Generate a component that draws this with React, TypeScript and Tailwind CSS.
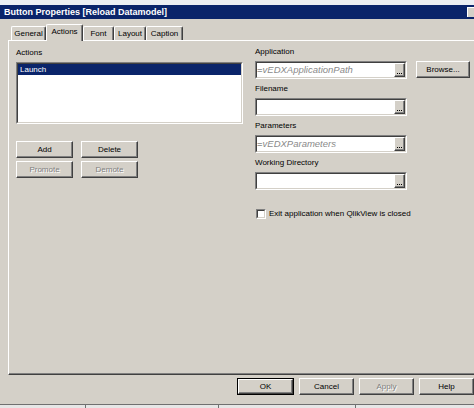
import React from "react";

const font = { fontFamily: '"Liberation Sans", Arial, sans-serif' };

function Btn({ label, w, disabled, className = "" }: { label: string; w: string; disabled?: boolean; className?: string }) {
  return (
    <div
      className={`${w} h-[17px] flex items-center justify-center bg-[#d4d0c8] border border-t-white border-l-white border-r-[#404040] border-b-[#404040] shadow-[inset_-1px_-1px_0_#808080] text-[8px] leading-none ${
        disabled ? "text-[#808080] [text-shadow:1px_1px_0_#ffffff]" : "text-black"
      } ${className}`}
    >
      {label}
    </div>
  );
}

function Ellipsis() {
  return (
    <div className="w-[11px] h-full flex items-end justify-center pb-[2px] bg-[#d4d0c8] border border-t-white border-l-white border-r-[#404040] border-b-[#404040] shadow-[inset_-1px_-1px_0_#808080]">
      <div className="flex gap-[1px]">
        <div className="w-[1px] h-[1px] bg-black" />
        <div className="w-[1px] h-[1px] bg-black" />
        <div className="w-[1px] h-[1px] bg-black" />
      </div>
    </div>
  );
}

function Field({ text }: { text?: string }) {
  return (
    <div className="w-[152px] h-[18px] border border-t-[#808080] border-l-[#808080] border-r-white border-b-white">
      <div className="h-full w-full flex border border-t-[#404040] border-l-[#404040] border-r-[#d4d0c8] border-b-[#d4d0c8] bg-white">
        <div className="flex-1 flex items-center text-[9.5px] leading-none whitespace-nowrap overflow-hidden">
          {text ? (
            <>
              <span className="text-[#505050]">=</span>
              <span className="italic text-[#8a8a8a]">{text}</span>
            </>
          ) : null}
        </div>
        <Ellipsis />
      </div>
    </div>
  );
}

function Label({ text, className = "" }: { text: string; className?: string }) {
  return <div className={`h-[10px] text-[8px] leading-[10px] text-black whitespace-nowrap ${className}`}>{text}</div>;
}

function Tab({ label, w, selected }: { label: string; w: string; selected?: boolean }) {
  if (selected) {
    return (
      <div
        className={`${w} h-[17px] relative z-10 flex items-start justify-center pt-[3px] bg-[#d4d0c8] border-t border-l border-t-white border-l-white border-r border-r-[#404040] shadow-[inset_-1px_0_0_#808080] rounded-t-[2px] text-[8px] leading-none text-black`}
      >
        {label}
      </div>
    );
  }
  return (
    <div
      className={`${w} h-[14px] mb-[1px] flex items-start justify-center pt-[3px] bg-[#d4d0c8] border-t border-l border-t-white border-l-white border-r border-r-[#404040] shadow-[inset_-1px_0_0_#808080] rounded-t-[2px] text-[8px] leading-none text-black`}
    >
      {label}
    </div>
  );
}

export default function App() {
  return (
    <div className="w-[474px] h-[408px] overflow-hidden bg-[#d4d0c8] flex flex-col" style={font}>
      <div className="h-[5px] bg-[#eceff3] shrink-0" />
      <div className="h-[14px] shrink-0 bg-[#0a246a] flex items-center pl-[4px]">
        <span className="text-white font-bold text-[9px] leading-none whitespace-nowrap">Button Properties [Reload Datamodel]</span>
        <div className="ml-auto mr-0 w-[7px] h-[10px] bg-[#d4d0c8] border-l border-t border-l-white border-t-white" />
      </div>
      <div className="h-[5px] shrink-0" />
      <div className="h-[17px] shrink-0 flex items-end pl-[11px]">
        <Tab label="General" w="w-[35px]" />
        <Tab label="Actions" w="w-[37px]" selected />
        <Tab label="Font" w="w-[31px]" />
        <Tab label="Layout" w="w-[32px]" />
        <Tab label="Caption" w="w-[37px]" />
      </div>
      <div className="-mt-[1px] ml-[8px] w-[480px] h-[335px] shrink-0 border-t border-l border-t-white border-l-white border-b border-b-[#404040] shadow-[inset_0_-1px_0_#808080] pt-[6px] pl-[7px] flex">
        <div className="w-[227px] flex flex-col">
          <Label text="Actions" className="mt-[1px]" />
          <div className="mt-[4px] w-[227px] h-[62px] border border-t-[#808080] border-l-[#808080] border-r-white border-b-white">
            <div className="h-full w-full border border-t-[#404040] border-l-[#404040] border-r-[#d4d0c8] border-b-[#d4d0c8] bg-white">
              <div className="h-[11px] bg-[#0a246a] text-white text-[8px] leading-[11px] pl-[2px]">Launch</div>
            </div>
          </div>
          <div className="mt-[17px] flex gap-[8px]">
            <Btn label="Add" w="w-[57px]" />
            <Btn label="Delete" w="w-[57px]" />
          </div>
          <div className="mt-[3px] flex gap-[8px]">
            <Btn label="Promote" w="w-[57px]" disabled />
            <Btn label="Demote" w="w-[57px]" disabled />
          </div>
        </div>
        <div className="ml-[12px] flex flex-col">
          <Label text="Application" />
          <div className="mt-[4px] flex gap-[9px]">
            <Field text="vEDXApplicationPath" />
            <Btn label="Browse..." w="w-[54px]" />
          </div>
          <Label text="Filename" className="mt-[5px]" />
          <div className="mt-[4px]">
            <Field />
          </div>
          <Label text="Parameters" className="mt-[5px]" />
          <div className="mt-[4px]">
            <Field text="vEDXParameters" />
          </div>
          <Label text="Working Directory" className="mt-[5px]" />
          <div className="mt-[4px]">
            <Field />
          </div>
          <div className="mt-[18px] h-[12px] flex items-center pl-[1px]">
            <div className="w-[10px] h-[10px] border border-t-[#808080] border-l-[#808080] border-r-white border-b-white">
              <div className="w-full h-full bg-white border border-t-[#404040] border-l-[#404040] border-r-[#d4d0c8] border-b-[#d4d0c8]" />
            </div>
            <span className="ml-[3px] text-[8px] leading-none text-black whitespace-nowrap">Exit application when QlikView is closed</span>
          </div>
        </div>
      </div>
      <div className="mt-[3px] shrink-0 flex pl-[237px]">
        <div className="w-[57px] h-[17px] border border-black">
          <div className="w-full h-full flex items-center justify-center bg-[#d4d0c8] border border-t-white border-l-white border-r-[#404040] border-b-[#404040] shadow-[inset_-1px_-1px_0_#808080] text-[8px] leading-none text-black">
            OK
          </div>
        </div>
        <Btn label="Cancel" w="w-[55px]" className="ml-[5px]" />
        <Btn label="Apply" w="w-[55px]" className="ml-[5px]" disabled />
        <Btn label="Help" w="w-[55px]" className="ml-[5px]" />
      </div>
      <div className="mt-[9px] shrink-0 h-[1px] bg-[#707070]" />
      <div className="flex-1 bg-[#e6e6e6] relative">
        <div className="absolute left-[85px] top-0 w-[1px] h-[3px] bg-[#707070]" />
        <div className="absolute left-[218px] top-0 w-[1px] h-[3px] bg-[#707070]" />
        <div className="absolute left-[355px] top-0 w-[1px] h-[3px] bg-[#707070]" />
      </div>
    </div>
  );
}
